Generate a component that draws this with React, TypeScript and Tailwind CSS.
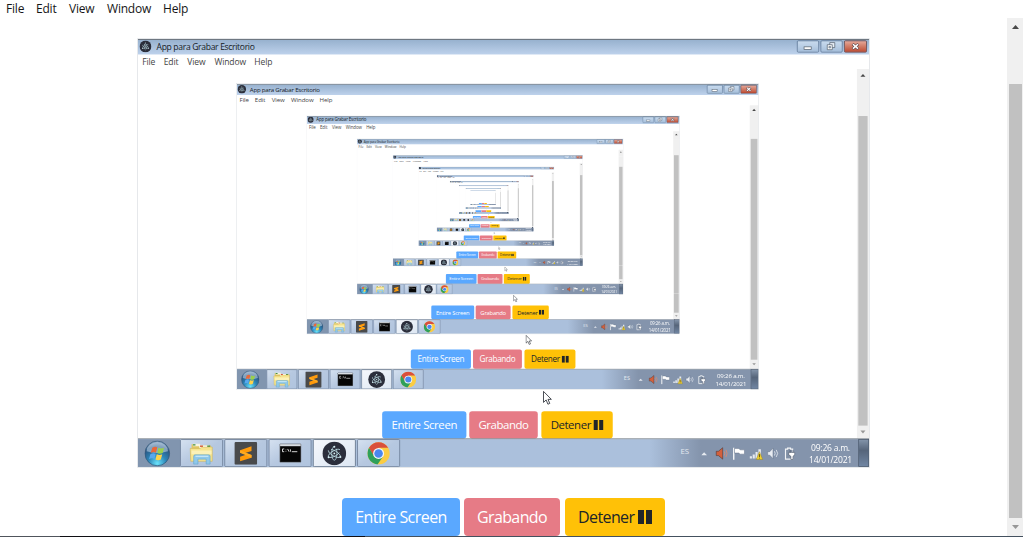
import React from "react";

const MAX_DEPTH = 11;
const LAST_LABELLED_DEPTH = 8;

function AppMark({ className }: { className: string }) {
  return (
    <svg viewBox="0 0 34 34" className={className}>
      <circle cx="17" cy="17" r="16.5" fill="#2b2e3b" />
      <g fill="none" stroke="#b9d9e0" strokeWidth="1.100" strokeDasharray="21 4.500">
        <ellipse cx="17" cy="17" rx="9.500" ry="3.700" transform="rotate(30 17 17)" />
        <ellipse cx="17" cy="17" rx="9.500" ry="3.700" transform="rotate(90 17 17)" />
        <ellipse cx="17" cy="17" rx="9.500" ry="3.700" transform="rotate(150 17 17)" />
      </g>
      <g fill="#d5eef2">
        <circle cx="17" cy="17" r="1.300" />
        <circle cx="9" cy="22.500" r="1.400" />
        <circle cx="25.500" cy="22" r="1.400" />
        <circle cx="17" cy="7.500" r="1.400" />
      </g>
    </svg>
  );
}

function StartOrb() {
  return (
    <svg viewBox="0 0 36 36" className="h-[36px] w-[36px]">
      <defs>
        <radialGradient id="orb" cx="50%" cy="90%" r="90%">
          <stop offset="0" stopColor="#6be3fb" />
          <stop offset=".4" stopColor="#2c86b8" />
          <stop offset=".75" stopColor="#2a5884" />
          <stop offset="1" stopColor="#88a4c0" />
        </radialGradient>
      </defs>
      <circle cx="18" cy="18" r="17.3" fill="url(#orb)" stroke="#365778" />
      <path d="M3 15a15 13 0 0 1 30 0q-15 5-30 0z" fill="#d9e8f5" opacity=".5" />
      <path d="M11 10q4-2.500 7-.5l-1.800 7.500q-4-2-7.500.5z" fill="#e8683a" />
      <path d="M19.500 10.200q4 2 8-.2l-2 7.500q-4 2-7.500 0z" fill="#9bcf4c" />
      <path d="M8.300 19q4-2.500 7.500-.5l-1.900 7.300q-3.500-2-7.500.5z" fill="#58a8ee" />
      <path d="M17.300 19q4 2.200 7.700 0l-2 7.500q-4 2-7.500 0z" fill="#ffd34a" />
    </svg>
  );
}

function FolderIcon() {
  return (
    <svg viewBox="0 0 34 32" className="h-[32px] w-[34px]">
      <path d="M3 3h11l2 2h14v20H3z" fill="#e0c766" />
      <path d="M5 2.500h10v3.500H5z" fill="#f7f4df" />
      <path d="M5 3h3.500v2H5z" fill="#3f8f3f" />
      <path d="M14 5h14v4H14z" fill="#fff" />
      <path d="M15 5h4v2h-4z" fill="#d5533c" />
      <path d="M25 5h4v2h-4z" fill="#459045" />
      <path d="M1 9h14l2-2h15v20H2z" fill="#f6e48f" stroke="#d0b455" strokeWidth=".8" />
      <path d="M3 12h28v5H3z" fill="#fbf1b8" />
      <path d="M6 20q0-2 2-2h19q2 0 2 2v11h-5.500v-7H12v7H6z" fill="#8fc8ea" stroke="#5fa3cc" strokeWidth=".8" />
      <path d="M8.500 20h18" stroke="#d5f0fb" strokeWidth="1.500" />
    </svg>
  );
}

function EditorIcon() {
  return (
    <svg viewBox="0 0 32 32" className="h-[32px] w-[32px]">
      <rect width="32" height="32" rx="2" fill="#494a4b" />
      <path d="M8 11.500 24 6v6.500l-9 3 9 2.700V22L8 27v-6.500l9-3-9-2.500z" fill="#ff9a0b" />
      <path d="m8 11.500 16 6.700V22L8 15z" fill="#ffab20" />
    </svg>
  );
}

function ConsoleIcon() {
  return (
    <svg viewBox="0 0 32 28" className="h-[27px] w-[31px]">
      <rect x=".5" y=".5" width="31" height="27" rx="1" fill="#050505" stroke="#8a9099" />
      <rect x="1" y="1" width="30" height="3" fill="#d8dde3" />
      <path d="M7 8H4.500v4H7M9.500 9v.8M9.500 11.200v.8M12 8l2 4M16 8.500v3.500M18 12h8" fill="none" stroke="#e8e8e8" strokeWidth="1.300" />
    </svg>
  );
}

function BrowserIcon() {
  return (
    <svg viewBox="0 0 32 32" className="h-[32px] w-[32px]">
      <circle cx="16" cy="16" r="15.500" fill="#fbcc43" />
      <path d="M2.600 8.200A15.500 15.500 0 0 1 29.400 8.200H16L9.200 20z" fill="#d94f3d" />
      <path d="M2.600 8.200A15.500 15.500 0 0 0 14.500 31.400L22 20.500 9.500 19.500z" fill="#2fa05a" />
      <circle cx="16" cy="16" r="7.700" fill="#f4f6f8" />
      <circle cx="16" cy="16" r="6" fill="#4a87ee" />
    </svg>
  );
}

function TrayIcons() {
  return (
    <svg viewBox="0 0 132 24" className="h-[24px] w-[132px] shrink-0">
      <path d="M0 14.500h8l-4-4z" fill="#e6eaf0" />
      <path d="M21 9h3l6-5v16l-6-5h-3z" fill="#d3603c" stroke="#4e3733" strokeWidth=".8" />
      <path d="M32 9q2 3 0 6M34.500 7q3.500 5 0 10" fill="none" stroke="#d98a72" strokeWidth="1.300" />
      <path d="M45.500 4v17" stroke="#fff" strokeWidth="1.800" />
      <path d="M46.500 5h6l2 2h6v6h-6l-2-1.500h-6z" fill="#fff" stroke="#657389" strokeWidth=".7" />
      <path d="M68 19v-3h3v3zM72 19v-5.500h3V19zM76 19v-9h3v9zM80 19V6h3.500v13z" fill="#e6eaf0" />
      <path d="m77 20.500 4.500-11 4.500 11z" fill="#f2d22f" stroke="#8f7b22" strokeWidth=".6" />
      <path d="M81.500 13v4M81.500 18v1" stroke="#463c12" strokeWidth="1.200" />
      <path d="M93 9.500h3l4.500-5v15l-4.500-5h-3z" fill="#e7ecf2" stroke="#647288" strokeWidth=".7" />
      <path d="M102.500 9q2 3 0 6M105 7q4 5 0 10" fill="none" stroke="#e1e7ee" strokeWidth="1.200" />
      <path d="M118 6h3V4.500h4V6h3v14h-10z" fill="#8190a6" stroke="#f2f4f6" strokeWidth="1.600" />
      <path d="M124.500 7v4M128.500 7v4M122.500 10.500h8.500v3.500l-2.500 2v4.500h-3V16l-3-2z" fill="#fff" stroke="#4a566a" strokeWidth=".9" />
    </svg>
  );
}

function TitleBar({ labelled }: { labelled: boolean }) {
  return (
    <div className="flex h-[22px] shrink-0 items-start border-t-[1.5px] border-[#3f4a55] bg-linear-to-b from-[#97b1ce] to-[#bed2ec] pl-[2px] pr-[3px]">
      <AppMark className="mt-[0.5px] h-[17px] w-[17px]" />
      <span className="ml-[7px] mt-[0.500px] grow whitespace-nowrap text-[12px] leading-[18px] tracking-[-0.46px] text-[#141a24]">
        {labelled && "App para Grabar Escritorio"}
      </span>
      <div className="mt-[1px] flex gap-[2px]">
        <span className="h-[17px] w-[31px] rounded-[2px] border border-[#5a7493] bg-linear-to-b from-[#c8daed] via-[#b9cee5] via-50% to-[#a4bdd9]">
          <svg viewBox="0 0 28 15" className="h-[15px] w-[28px]">
            <rect x="9" y="8" width="10" height="3.500" fill="#fff" stroke="#56616e" />
          </svg>
        </span>
        <span className="h-[17px] w-[31px] rounded-[2px] border border-[#5a7493] bg-linear-to-b from-[#c8daed] via-[#b9cee5] via-50% to-[#a4bdd9]">
          <svg viewBox="0 0 28 15" className="h-[15px] w-[28px]">
            <path d="M12 2h7v7h-7z" fill="#e6edf4" stroke="#56616e" />
            <path d="M8.500 5h7v7h-7z" fill="#fff" stroke="#56616e" />
            <path d="M10.800 7.500h2.500v2h-2.500z" fill="#b4c9df" stroke="#56616e" strokeWidth=".8" />
          </svg>
        </span>
        <span className="h-[17px] w-[32px] rounded-[2px] border border-[#63312f] bg-linear-to-b from-[#e6a899] via-[#d07a65] via-50% to-[#bd4a31]">
          <svg viewBox="0 0 30 15" className="h-[15px] w-[30px]">
            <path d="m11 4 8 7M19 4l-8 7" stroke="#5f4a50" strokeWidth="4" />
            <path d="m11.500 4.400 7 6.200M18.500 4.400l-7 6.200" stroke="#fff" strokeWidth="2.200" />
          </svg>
        </span>
      </div>
    </div>
  );
}

function MenuBar({ root, labelled }: { root: boolean; labelled: boolean }) {
  return (
    <nav
      className={
        root
          ? "flex h-[18px] shrink-0 items-start bg-white pl-[6px] text-[12px] leading-[17px] tracking-[-0.2px] text-[#161616]"
          : "flex h-[20px] shrink-0 items-center bg-white pl-[6px] text-[12px] leading-[18px] tracking-[-0.2px] text-[#444]"
      }
    >
      {labelled && (
        <>
          <span className="w-[30px]">File</span>
          <span className="w-[33px]">Edit</span>
          <span className="w-[38px]">View</span>
          <span className="w-[56px]">Window</span>
          <span>Help</span>
        </>
      )}
    </nav>
  );
}

function ScrollBar() {
  return (
    <div className="flex w-[17px] shrink-0 flex-col items-center bg-[#f0f0f0]">
      <svg viewBox="0 0 17 66" className="h-[66px] w-[17px] shrink-0">
        <path d="M5 11h7L8.500 7z" fill="#484848" />
      </svg>
      <div className="w-[13px] grow bg-[#c1c1c1]" />
      <svg viewBox="0 0 17 18" className="h-[18px] w-[17px] shrink-0">
        <path d="M5 7h7l-3.500 4z" fill="#979797" />
      </svg>
    </div>
  );
}

function TaskButton({ active, children }: { active?: boolean; children: React.ReactNode }) {
  return (
    <div
      className={
        active
          ? "flex w-[60px] items-center justify-center rounded-[2px] border-[1.5px] border-[#5e6c7e] bg-linear-to-br from-[#f5f8fc] to-[#dce6f2]"
          : "flex w-[60px] items-center justify-center rounded-[2px] border-[1.5px] border-[#687890] bg-linear-to-br from-[#d5e1f0] via-[#b6c8e0] to-[#b0c4de]"
      }
    >
      {children}
    </div>
  );
}

function TaskBar({ labelled }: { labelled: boolean }) {
  return (
    <footer className="flex h-[40px] shrink-0 border-t-[1.5px] border-[#65707c] bg-linear-to-r from-[#abc0dc] from-70% to-[#8494ac] to-77%">
      <div className="flex w-[59px] items-center justify-center bg-[#8195af] pr-[5px]">
        <StartOrb />
      </div>
      <div className="flex gap-[2px]">
        <TaskButton><FolderIcon /></TaskButton>
        <TaskButton><EditorIcon /></TaskButton>
        <TaskButton><ConsoleIcon /></TaskButton>
        <TaskButton active><AppMark className="h-[34px] w-[34px]" /></TaskButton>
        <TaskButton><BrowserIcon /></TaskButton>
      </div>
      <div className="flex grow items-center justify-end text-[12px] text-white">
        {labelled && <span className="mr-[17px] pb-[5px] text-[11px] text-[#e4e9f0]">ES</span>}
        <TrayIcons />
        <div className="ml-[12px] mr-[2px] w-[74px] text-center leading-[17px] tracking-[-0.35px]">
          {labelled && (
            <>
              <div>09:26 a.m.</div>
              <div>14/01/2021</div>
            </>
          )}
        </div>
        <div className="h-full w-[15px] border border-[#49576a] bg-linear-to-b from-[#8293a9] via-[#56657a] via-40% to-[#7186a3]" />
      </div>
    </footer>
  );
}

function ScreenEdge() {
  return (
    <div className="flex h-[1px] shrink-0">
      <div className="w-[60px] bg-[#50555c]" />
      <div className="w-[305px] bg-[#100f14]" />
      <div className="grow bg-[#44515f]" />
    </div>
  );
}

function Controls({ labelled }: { labelled: boolean }) {
  return (
    <div className="mt-[31.5px] flex justify-center text-[16px] leading-[38px]">
      <button className="h-[38px] w-[118px] whitespace-nowrap rounded-[4px] bg-[#5aa8ff] tracking-[-0.55px] text-white">
        {labelled && "Entire Screen"}
      </button>
      <button className="ml-[4px] h-[38px] w-[96px] whitespace-nowrap rounded-[4px] bg-[#e67b86] tracking-[-0.6px] text-white">
        {labelled && "Grabando"}
      </button>
      <button className="ml-[5px] flex h-[38px] w-[100px] items-center whitespace-nowrap rounded-[4px] bg-[#ffc107] pl-[13px] tracking-[-0.6px] text-[#212529]">
        <span className="w-[60px] text-left">{labelled && "Detener"}</span>
        <svg viewBox="0 0 14 14" className="h-[14px] w-[14px]">
          <path d="M0 0h6v14H0zM8 0h6v14H8z" fill="#212529" />
        </svg>
      </button>
    </div>
  );
}

function Pointer() {
  return (
    <svg viewBox="0 0 13 20" className="absolute left-[567px] top-[493px] z-10 h-[20px] w-[13px]">
      <path d="M1 1v15.500l3.700-3.500 2.500 6 2.600-1.100-2.500-5.700H12z" fill="#fff" stroke="#3d4148" strokeWidth="1.300" />
    </svg>
  );
}

function Desktop({ depth }: { depth: number }) {
  const root = depth === 0;
  const labelled = depth <= LAST_LABELLED_DEPTH;
  return (
    <div
      className={
        root
          ? "flex h-[537px] w-[1024px] flex-col bg-white"
          : "relative flex h-[600px] w-[1024px] origin-top-left scale-x-[0.7139] scale-y-[0.7133] flex-col bg-white outline-[1.5px] outline-[#dcdfe3]"
      }
    >
      {!root && <TitleBar labelled={labelled} />}
      <MenuBar root={root} labelled={labelled} />
      <main className="flex min-h-0 grow">
        <div className="grow bg-white pt-[20.5px]">
          <div className="mx-auto h-[428px] w-[731px]">
            {depth < MAX_DEPTH && <Desktop depth={depth + 1} />}
          </div>
          <Controls labelled={labelled} />
        </div>
        <ScrollBar />
      </main>
      {root ? <ScreenEdge /> : <TaskBar labelled={labelled} />}
      {!root && <Pointer />}
    </div>
  );
}

export default function App() {
  return (
    <div className="h-[537px] w-[1023px] overflow-hidden bg-white font-['Open_Sans','Noto_Sans',sans-serif]">
      <Desktop depth={0} />
    </div>
  );
}
